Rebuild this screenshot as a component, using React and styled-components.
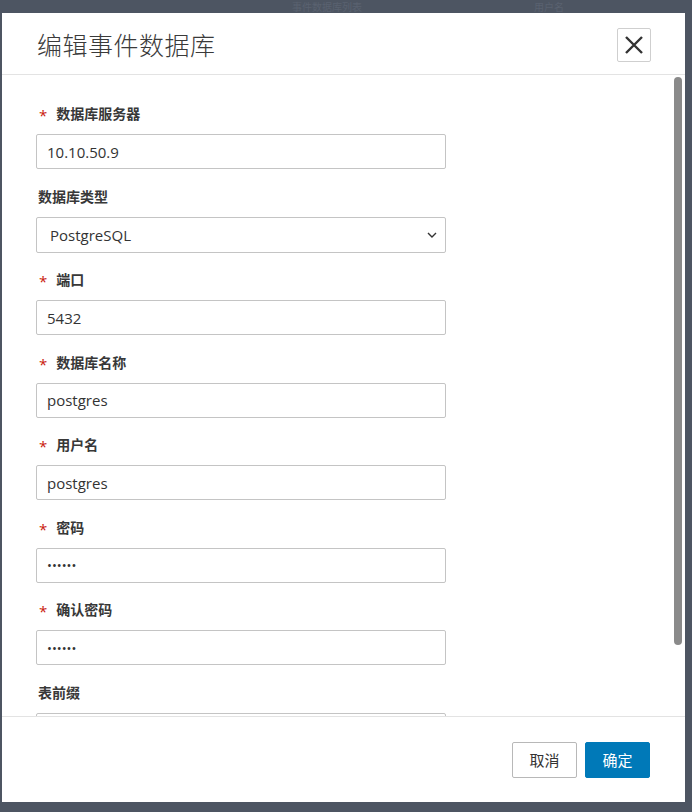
import React from "react";
import styled, { createGlobalStyle } from "styled-components";

const Global = createGlobalStyle`
  html, body { margin: 0; padding: 0; }
  body {
    background: #4d5562;
    font-family: "Open Sans", "Noto Sans CJK SC", sans-serif;
    color: #333;
  }
  * { box-sizing: border-box; }
`;

const Backdrop = styled.div`
  width: 692px;
  height: 812px;
  background: #4d5562;
  display: flex;
  flex-direction: column;
`;

const GhostBar = styled.div`
  height: 13px;
  flex: none;
  display: flex;
  align-items: center;
  padding-left: 292px;
  gap: 172px;
  color: #5a6270;
  font-family: "Noto Sans CJK SC", sans-serif;
  font-size: 10px;
  line-height: 12px;
`;

const Modal = styled.div`
  margin-left: 2px;
  width: 683px;
  height: 789px;
  background: #fff;
  display: flex;
  flex-direction: column;
`;

const Header = styled.div`
  height: 62px;
  flex: none;
  display: flex;
  align-items: center;
  justify-content: space-between;
  padding: 0 34px 0 35px;
  border-bottom: 1px solid #e3e3e3;
`;

const Title = styled.h1`
  margin: 0;
  font-family: "Noto Sans CJK SC", sans-serif;
  font-weight: 300;
  font-size: 25px;
  color: #3a3a3a;
  letter-spacing: 0.5px;
`;

const CloseButton = styled.button`
  width: 34px;
  height: 34px;
  border: 1px solid #cfcfcf;
  border-radius: 2px;
  background: #fff;
  display: flex;
  align-items: center;
  justify-content: center;
  padding: 0;
  margin-top: 2px;
`;

const BodyFrame = styled.div`
  flex: 1;
  position: relative;
  min-height: 0;
  display: flex;
`;

const Body = styled.div`
  flex: 1;
  overflow-y: auto;
  scrollbar-width: none;
  padding: 28px 0 45px 34px;
  display: flex;
  flex-direction: column;
  gap: 16.5px;
  &::-webkit-scrollbar { display: none; }
`;

const ScrollThumb = styled.div`
  position: absolute;
  right: 3px;
  top: 2px;
  width: 8px;
  height: 568px;
  border-radius: 4px;
  background: #8a8a8a;
`;

const Group = styled.div`
  display: flex;
  flex-direction: column;
  gap: 11px;
  flex: none;
`;

const Label = styled.label`
  height: 20px;
  display: flex;
  align-items: center;
  font-family: "Noto Sans CJK SC", sans-serif;
  font-weight: 700;
  font-size: 14px;
  color: #383838;
  padding-left: ${(p) => (p.$required ? "3px" : "2px")};
`;

const Star = styled.span`
  color: #c9190b;
  font-weight: 400;
  font-size: 15px;
  margin-right: 9px;
  font-family: "Open Sans", sans-serif;
  position: relative;
  top: 2px;
`;

const Input = styled.input`
  width: 410px;
  height: 35px;
  border: 1px solid #c4c4c4;
  border-radius: 2px;
  padding: 0 10px;
  font-family: "Open Sans", sans-serif;
  font-size: ${(p) => (p.type === "password" ? "13px" : "15px")};
  color: #333;
  background: #fff;
  outline: none;
`;

const SelectWrap = styled.div`
  position: relative;
  width: 410px;
  height: 36px;
`;

const Select = styled.select`
  width: 100%;
  height: 100%;
  appearance: none;
  border: 1px solid #c4c4c4;
  border-radius: 2px;
  padding: 0 30px 0 13px;
  font-family: "Open Sans", sans-serif;
  font-size: 15px;
  color: #333;
  background: #fff;
  outline: none;
`;

const Chevron = styled.svg`
  position: absolute;
  right: 9px;
  top: 15px;
  pointer-events: none;
`;

const Footer = styled.div`
  height: 86px;
  flex: none;
  border-top: 1px solid #e3e3e3;
  display: flex;
  align-items: center;
  justify-content: flex-end;
  gap: 8px;
  padding: 0 35px 0 0;
`;

const Button = styled.button`
  width: 65px;
  height: 36px;
  border-radius: 2px;
  font-family: "Noto Sans CJK SC", sans-serif;
  font-size: 15px;
  border: 1px solid ${(p) => (p.$primary ? "#0079b8" : "#b8b8b8")};
  background: ${(p) => (p.$primary ? "#0079b8" : "#fff")};
  color: ${(p) => (p.$primary ? "#fff" : "#333")};
  padding: 0;
`;

const fields = [
  { label: "数据库服务器", required: true, value: "10.10.50.9" },
  { label: "数据库类型", select: true, value: "PostgreSQL" },
  { label: "端口", required: true, value: "5432" },
  { label: "数据库名称", required: true, value: "postgres" },
  { label: "用户名", required: true, value: "postgres" },
  { label: "密码", required: true, value: "123456", type: "password" },
  { label: "确认密码", required: true, value: "123456", type: "password" },
  { label: "表前缀", value: "" },
];

export default function App() {
  return (
    <>
      <Global />
      <Backdrop>
        <GhostBar>
          <span>事件数据库列表</span>
          <span>用户名</span>
        </GhostBar>
        <Modal>
          <Header>
            <Title>编辑事件数据库</Title>
            <CloseButton aria-label="关闭">
              <svg width="20" height="20" viewBox="0 0 20 20">
                <path d="M2 2 L18 18 M18 2 L2 18" stroke="#333" strokeWidth="2.4" fill="none" />
              </svg>
            </CloseButton>
          </Header>
          <BodyFrame>
            <Body>
              {fields.map((f) => (
                <Group key={f.label}>
                  <Label $required={f.required}>
                    {f.required && <Star>*</Star>}
                    {f.label}
                  </Label>
                  {f.select ? (
                    <SelectWrap>
                      <Select defaultValue={f.value}>
                        <option>PostgreSQL</option>
                        <option>MySQL</option>
                      </Select>
                      <Chevron width="10" height="6" viewBox="0 0 10 6">
                        <path d="M1 1 L5 5 L9 1" stroke="#333" strokeWidth="1.4" fill="none" />
                      </Chevron>
                    </SelectWrap>
                  ) : (
                    <Input type={f.type || "text"} defaultValue={f.value} />
                  )}
                </Group>
              ))}
            </Body>
            <ScrollThumb />
          </BodyFrame>
          <Footer>
            <Button>取消</Button>
            <Button $primary>确定</Button>
          </Footer>
        </Modal>
      </Backdrop>
    </>
  );
}
